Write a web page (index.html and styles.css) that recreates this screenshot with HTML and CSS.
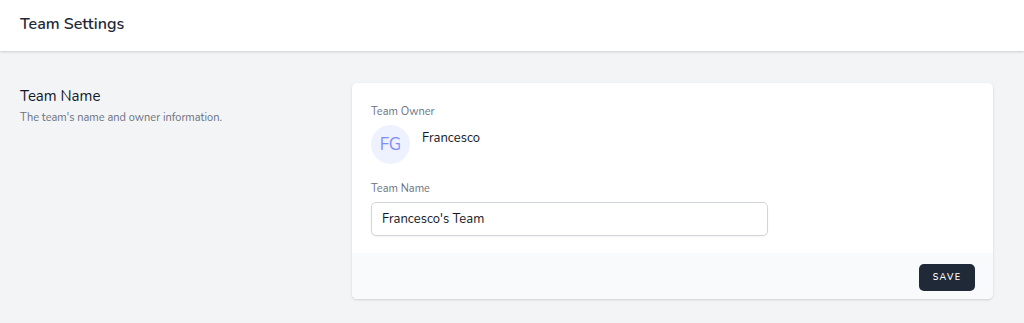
FILE: index.html
```html
<!DOCTYPE html>
<html lang="en">
<head>
<meta charset="utf-8">
<title>Team Settings</title>
<link rel="stylesheet" href="styles.css">
</head>
<body>
<header class="topbar">
  <h2 class="page-title">Team Settings</h2>
</header>
<main class="content">
  <section class="form-section">
    <div class="section-info">
      <h3 class="section-title">Team Name</h3>
      <p class="section-desc">The team's name and owner information.</p>
    </div>
    <div class="card">
      <div class="card-body">
        <div class="field">
          <label class="label">Team Owner</label>
          <div class="owner">
            <div class="avatar">FG</div>
            <div class="owner-name">Francesco</div>
          </div>
        </div>
        <div class="field field-name">
          <label class="label" for="team-name">Team Name</label>
          <input id="team-name" class="input" type="text" value="Francesco's Team">
        </div>
      </div>
      <div class="card-footer">
        <button class="btn" type="button">Save</button>
      </div>
    </div>
  </section>
</main>
</body>
</html>
```

FILE: styles.css
```css
* { box-sizing: border-box; }
html, body { margin: 0; padding: 0; }
body {
  font-family: "Nunito", "Lato", "Open Sans", sans-serif;
  background: #f3f4f6;
  color: #1f2937;
  height: 323px;
  overflow: hidden;
}
.topbar {
  background: #fff;
  height: 51px;
  box-shadow: 0 1px 3px rgba(0,0,0,0.1), 0 1px 2px rgba(0,0,0,0.06);
  padding: 0 20px;
  display: flex;
  align-items: center;
  position: relative;
  z-index: 1;
}
.page-title {
  margin: 0;
  font-size: 16px;
  font-weight: 600;
  color: #1f2937;
  padding-bottom: 4px;
}
.content {
  padding: 32px 31px 0 20px;
}
.form-section {
  display: grid;
  grid-template-columns: 332px 1fr;
}
.section-info { padding-top: 3px; }
.section-title {
  margin: 0;
  font-size: 15px;
  font-weight: 400;
  color: #111827;
  line-height: 20px;
}
.section-desc {
  margin: 4px 0 0;
  font-size: 11px;
  color: #6b7280;
  line-height: 16px;
}
.card {
  background: #fff;
  border-radius: 5px;
  box-shadow: 0 1px 3px rgba(0,0,0,0.1), 0 1px 2px rgba(0,0,0,0.06);
  overflow: hidden;
}
.card-body {
  padding: 21px 19px 18px;
  height: 170px;
}
.label {
  display: block;
  font-size: 11px;
  color: #6b7280;
  line-height: 16px;
}
.owner {
  display: flex;
  align-items: flex-start;
  margin-top: 5px;
}
.avatar {
  width: 39px;
  height: 39px;
  border-radius: 50%;
  background: #eef2ff;
  color: #818cf8;
  display: flex;
  align-items: center;
  justify-content: center;
  font-size: 17px;
  flex: none;
}
.owner-name {
  margin-left: 12px;
  margin-top: 4px;
  font-size: 13px;
  color: #111827;
  line-height: 18px;
}
.field-name { margin-top: 17px; }
.input {
  display: block;
  margin-top: 5px;
  width: 397px;
  height: 34px;
  border: 1px solid #d1d5db;
  border-radius: 5px;
  padding: 0 10px;
  font-family: inherit;
  font-size: 13px;
  color: #111827;
  box-shadow: 0 1px 2px rgba(0,0,0,0.05);
  background: #fff;
}
.card-footer {
  background: #f9fafb;
  height: 46px;
  display: flex;
  justify-content: flex-end;
  align-items: center;
  padding: 0 18px;
}
.btn {
  background: #1f2937;
  color: #fff;
  border: none;
  border-radius: 5px;
  width: 56px;
  height: 27px;
  font-family: inherit;
  font-size: 9px;
  font-weight: 600;
  letter-spacing: 1.3px;
  text-transform: uppercase;
  padding: 0;
  margin-top: 2px;
}
```
